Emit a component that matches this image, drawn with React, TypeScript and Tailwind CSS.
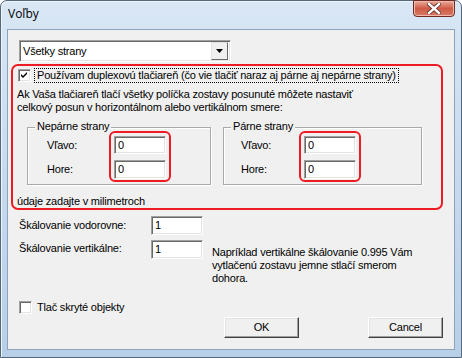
import React from "react";

const sunken =
  "bg-white border border-t-[#a0a0a0] border-l-[#a0a0a0] border-r-white border-b-white shadow-[inset_1px_1px_0_#696969,inset_-1px_-1px_0_#e3e3e3]";

function Field({ value, className = "" }: { value: string; className?: string }) {
  return (
    <div className={`${sunken} ${className} flex items-center pl-[3px] text-black`}>{value}</div>
  );
}

function Check({ checked }: { checked?: boolean }) {
  return (
    <div className={`${sunken} w-[13px] h-[13px] shrink-0 flex items-center justify-center`}>
      {checked && (
        <svg width="7" height="7" viewBox="0 0 7 7">
          <path d="M0 2 L2 4 L6 0 L6 2 L2 6 L0 4 Z" fill="#000" />
        </svg>
      )}
    </div>
  );
}

function Button({ children }: { children: React.ReactNode }) {
  return (
    <div className="w-[75px] h-[21px] flex items-center justify-center bg-[#f0f0f0] border border-t-white border-l-white border-r-[#404040] border-b-[#404040] shadow-[inset_-1px_-1px_0_#a0a0a0,inset_1px_1px_0_#e3e3e3]">
      {children}
    </div>
  );
}

// skupina s posunmi (Vľavo / Hore)
function Group({ title, labelPad, width }: { title: string; labelPad: string; width: string }) {
  return (
    <div className={`relative h-[58px] border border-[#a9a9a9] shadow-[1px_1px_0_white,inset_1px_1px_0_white] ${width}`}>
      <span className="absolute -top-[8px] left-[7px] bg-[#f0f0f0] px-[2px] leading-[13px]">{title}</span>
      <div className="flex items-start pt-[3px]">
        <div className={`flex flex-col gap-[6px] pt-[5px] ${labelPad}`}>
          <div className="h-[18px] flex items-center">Vľavo:</div>
          <div className="h-[18px] flex items-center">Hore:</div>
        </div>
        <div className="border-2 border-[#ed1c24] rounded-[6px] pl-[3px] pr-[3px] pt-[3px] pb-[1px] flex flex-col gap-[6px]">
          <Field value="0" className="w-[52px] h-[18px]" />
          <Field value="0" className="w-[52px] h-[19px]" />
        </div>
      </div>
    </div>
  );
}

export default function App() {
  return (
    <div
      className="w-[462px] h-[358px] bg-white text-[11px] leading-[13px] tracking-[-0.2px] text-black"
      style={{ fontFamily: '"Liberation Sans", Arial, sans-serif' }}
    >
      <div className="w-full h-full flex flex-col rounded-t-[7px] border border-[#55677b] bg-gradient-to-b from-[#d9e7f5] via-[#c6daef] to-[#b8cfe8] shadow-[inset_1px_1px_0_#eef5fc] px-[6px] pb-[7px]">
        <div className="h-[28px] flex items-start justify-between">
          <span className="mt-[5px] ml-[1px] text-[12px] leading-[16px] tracking-normal" style={{ fontFamily: '"Open Sans", "Noto Sans", sans-serif' }}>
            Voľby
          </span>
          <div className="w-[42px] h-[17px] -mt-px rounded-b-[4px] border border-[#6e2a22] bg-gradient-to-b from-[#e9ab9c] via-[#cf5a45] to-[#d77a66] flex items-center justify-center shadow-[inset_0_0_0_1px_#f1b9ad]">
            <svg width="14" height="11" viewBox="0 0 14 11">
              <path d="M2 1 L12 10 M12 1 L2 10" stroke="#5a2a22" strokeWidth="4" strokeLinecap="square" fill="none" />
              <path d="M2 1 L12 10 M12 1 L2 10" stroke="#ffffff" strokeWidth="2.4" strokeLinecap="square" fill="none" />
            </svg>
          </div>
        </div>

        <div className="flex-1 border border-[#8ea3b9] bg-[#f0f0f0] flex flex-col">
          {/* výber strán */}
          <div className={`ml-[11px] mt-[10px] w-[212px] h-[22px] ${sunken} flex items-center justify-between pl-[3px] pr-[2px]`}>
            <span>Všetky strany</span>
            <div className="w-[17px] h-[18px] bg-[#f0f0f0] border border-t-[#e3e3e3] border-l-[#e3e3e3] border-r-[#696969] border-b-[#696969] flex items-center justify-center">
              <svg width="7" height="4" viewBox="0 0 7 4">
                <path d="M0 0 H7 L3.5 4 Z" fill="#000" />
              </svg>
            </div>
          </div>

          {/* duplex */}
          <div className="ml-[3px] mt-[2px] w-[432px] h-[146px] border-2 border-[#ed1c24] rounded-[7px] flex flex-col">
            <div className="flex items-center pl-[5px] pt-[2px]">
              <Check checked />
              <span className="ml-[3px] px-[2px] border border-dotted border-black leading-[13px]">
                Používam duplexovú tlačiareň (čo vie tlačiť naraz aj párne aj nepárne strany)
              </span>
            </div>
            <p className="pl-[4px] mt-[5px]">
              Ak Vaša tlačiareň tlačí všetky políčka zostavy posunuté môžete nastaviť
              <br />
              celkový posun v horizontálnom alebo vertikálnom smere:
            </p>
            <div className="flex pl-[14px] mt-[13px] gap-[12px]">
              <Group title="Nepárne strany" labelPad="pl-[19px] w-[81px]" width="w-[184px]" />
              <Group title="Párne strany" labelPad="pl-[17px] w-[75px]" width="w-[199px]" />
            </div>
            <p className="pl-[4px] mt-[10px]">údaje zadajte v milimetroch</p>
          </div>

          {/* škálovanie */}
          <div className="flex items-center pl-[11px] mt-[6px]">
            <span className="w-[132px]">Škálovanie vodorovne:</span>
            <Field value="1" className="w-[52px] h-[19px]" />
          </div>
          <div className="flex items-start pl-[11px] mt-[5px]">
            <span className="w-[132px] mt-[2px]">Škálovanie vertikálne:</span>
            <Field value="1" className="w-[52px] h-[19px]" />
            <p className="ml-[9px] mt-[6px]">
              Napríklad vertikálne škálovanie 0.995 Vám
              <br />
              vytlačenú zostavu jemne stlačí smerom
              <br />
              dohora.
            </p>
          </div>

          <div className="flex items-center pl-[11px] mt-[16px]">
            <Check />
            <span className="ml-[5px]">Tlač skryté objekty</span>
          </div>

          <div className="flex mt-[3px] pl-[216px] gap-[69px]">
            <Button>OK</Button>
            <Button>Cancel</Button>
          </div>
        </div>
      </div>
    </div>
  );
}
